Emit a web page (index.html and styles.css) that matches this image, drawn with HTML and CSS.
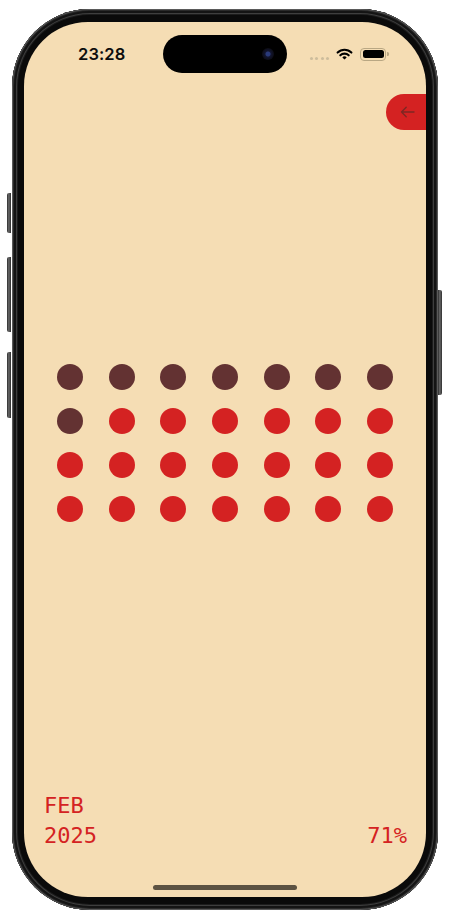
FILE: index.html
```html
<!DOCTYPE html>
<html lang="en">
<head>
<meta charset="utf-8">
<title>Month dots</title>
<link rel="stylesheet" href="styles.css">
</head>
<body>
<div class="phone">
  <span class="side-btn btn-action"></span>
  <span class="side-btn btn-vol-up"></span>
  <span class="side-btn btn-vol-down"></span>
  <span class="side-btn btn-power"></span>
  <div class="screen">
    <div class="status">
      <span class="time">23:28</span>
      <div class="island"><span class="camera"></span></div>
      <div class="status-right">
        <span class="signal"><i></i><i></i><i></i><i></i></span>
        <svg class="wifi" width="17" height="12" viewBox="0 0 17 12">
          <path d="M1.6 4.6 A9.8 9.8 0 0 1 15.4 4.6" fill="none" stroke="#000" stroke-width="2.1" stroke-linecap="round"/>
          <path d="M4.3 7.3 A6 6 0 0 1 12.7 7.3" fill="none" stroke="#000" stroke-width="2.1" stroke-linecap="round"/>
          <path d="M8.5 11.6 L6.3 9.4 A3.1 3.1 0 0 1 10.7 9.4 Z" fill="#000"/>
        </svg>
        <span class="battery"><span class="battery-fill"></span></span><span class="battery-nub"></span>
      </div>
    </div>
    <div class="toolbar">
      <button class="back" aria-label="Back">
        <svg width="15" height="12" viewBox="0 0 15 12">
          <path d="M14 6 H1.5 M6.2 1.3 L1.5 6 L6.2 10.7" fill="none" stroke="#7e2723" stroke-width="1.4" stroke-linecap="round" stroke-linejoin="round"/>
        </svg>
      </button>
    </div>
    <div class="grid">
      <span class="dot past"></span><span class="dot past"></span><span class="dot past"></span><span class="dot past"></span><span class="dot past"></span><span class="dot past"></span><span class="dot past"></span>
      <span class="dot past"></span><span class="dot"></span><span class="dot"></span><span class="dot"></span><span class="dot"></span><span class="dot"></span><span class="dot"></span>
      <span class="dot"></span><span class="dot"></span><span class="dot"></span><span class="dot"></span><span class="dot"></span><span class="dot"></span><span class="dot"></span>
      <span class="dot"></span><span class="dot"></span><span class="dot"></span><span class="dot"></span><span class="dot"></span><span class="dot"></span><span class="dot"></span>
    </div>
    <div class="footer">
      <div class="date"><span>FEB</span><span>2025</span></div>
      <span class="pct">71%</span>
    </div>
    <div class="home"></div>
  </div>
</div>
</body>
</html>
```
FILE: styles.css
```css
* { box-sizing: border-box; }
html, body { margin: 0; padding: 0; background: #ffffff; }
body { width: 450px; height: 920px; overflow: hidden; }

.phone {
  position: relative;
  width: 426px;
  height: 901px;
  margin: 9px 0 0 12px;
  padding: 13px 12px;
  border-radius: 78px;
  background: #0a0a0a;
  box-shadow:
    inset 0 0 0 1px #5a5a5a,
    inset 0 0 0 2px #2a2a2a,
    inset 0 0 0 4px #141414,
    inset 0 0 0 5px #3e3e3e,
    inset 0 0 0 6px #1c1c1c;
}

.side-btn {
  position: absolute;
  width: 4px;
  background: linear-gradient(90deg, #2b2b2b 0%, #6a6a6a 45%, #2e2e2e 100%);
  border-radius: 2px 0 0 2px;
}
.btn-action { left: -5px; top: 184px; height: 40px; }
.btn-vol-up { left: -5px; top: 248px; height: 75px; }
.btn-vol-down { left: -5px; top: 343px; height: 66px; }
.btn-power { right: -4px; top: 281px; height: 105px; border-radius: 0 2px 2px 0; }

.screen {
  height: 100%;
  border-radius: 64px;
  background: #f5ddb4;
  overflow: hidden;
  display: flex;
  flex-direction: column;
}

.status {
  height: 62px;
  padding-top: 13px;
  display: grid;
  grid-template-columns: 1fr auto 1fr;
  align-items: start;
}
.time {
  padding-left: 54px;
  font-family: Inter, "Noto Sans", sans-serif;
  font-weight: 600;
  font-size: 16.5px;
  line-height: 38px;
  color: #0d0d0d;
  letter-spacing: 0.1px;
}
.island {
  width: 124px;
  height: 38px;
  border-radius: 19px;
  background: #000;
  display: flex;
  justify-content: flex-end;
  align-items: center;
  padding-right: 13px;
}
.camera {
  width: 12px;
  height: 12px;
  border-radius: 50%;
  background: radial-gradient(circle at 50% 50%, #2a3a7a 0 2px, #121530 3px, #0c0c14 6px);
}
.status-right {
  height: 38px;
  display: flex;
  justify-content: flex-end;
  align-items: center;
  padding-right: 37px;
}
.signal {
  display: flex;
  gap: 2.4px;
  margin-top: 8px;
  margin-right: 7px;
}
.signal i {
  width: 3px;
  height: 3px;
  border-radius: 50%;
  background: #cdbd9c;
}
.wifi { margin-right: 7px; margin-top: -1px; }
.battery {
  width: 26px;
  height: 13px;
  border: 1px solid #b9a783;
  border-radius: 4px;
  padding: 1.5px;
  display: flex;
}
.battery-fill {
  flex: 1;
  background: #000;
  border-radius: 2.5px;
}
.battery-nub {
  width: 2px;
  height: 4.5px;
  margin-left: 1px;
  background: #b9a783;
  border-radius: 0 1.5px 1.5px 0;
}

.toolbar {
  display: flex;
  justify-content: flex-end;
  margin-top: 10px;
}
.back {
  width: 40px;
  height: 36px;
  border: 0;
  padding: 0 0 0 14px;
  border-radius: 18px 0 0 18px;
  background: #d42222;
  display: flex;
  align-items: center;
}

.grid {
  margin-top: 234px;
  padding: 0 33px;
  display: grid;
  grid-template-columns: repeat(7, 26px);
  justify-content: space-between;
  row-gap: 18px;
}
.dot {
  width: 26px;
  height: 26px;
  border-radius: 50%;
  background: #d42222;
}
.dot.past { background: #633232; }

.footer {
  margin-top: auto;
  padding: 0 19px 0 20px;
  display: flex;
  justify-content: space-between;
  align-items: flex-end;
  font-family: "DejaVu Sans Mono", "Liberation Mono", monospace;
  font-size: 22px;
  line-height: 30px;
  color: #d42222;
}
.date { display: flex; flex-direction: column; }

.home {
  align-self: center;
  width: 144px;
  height: 5px;
  border-radius: 3px;
  background: #5d5343;
  margin: 34px 0 7px;
}
```
